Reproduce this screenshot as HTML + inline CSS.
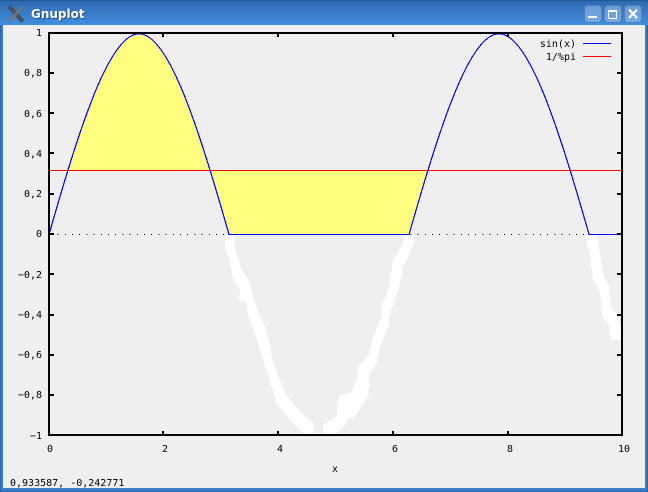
<!DOCTYPE html>
<html>
<head>
<meta charset="utf-8">
<title>Gnuplot</title>
<style>
html,body{margin:0;padding:0;width:648px;height:492px;overflow:hidden;background:#efefef}
svg{display:block}
text{font-family:"DejaVu Sans Mono","Liberation Mono",monospace;font-size:10px;fill:#000}
</style>
</head>
<body>
<svg width="648" height="492" viewBox="0 0 648 492" xmlns="http://www.w3.org/2000/svg">
<defs>
<linearGradient id="tb" x1="0" y1="0" x2="0" y2="1">
<stop offset="0" stop-color="#2c68ad"/>
<stop offset="0.5" stop-color="#3a7ac6"/>
<stop offset="1" stop-color="#3e8ee0"/>
</linearGradient>
<linearGradient id="btn" x1="0" y1="0" x2="0" y2="1">
<stop offset="0" stop-color="#6d9ad0"/>
<stop offset="1" stop-color="#76a8e4"/>
</linearGradient>
<clipPath id="above"><rect x="49" y="33" width="573" height="137"/></clipPath>
</defs>

<!-- window frame -->
<rect x="0" y="0" width="648" height="492" fill="#3a7cc8"/>
<rect x="0" y="0" width="648" height="25" fill="url(#tb)"/>
<rect x="0" y="0" width="648" height="1" fill="#1f5a9e"/>
<rect x="0" y="25" width="1" height="467" fill="#2a66ad"/>
<rect x="647" y="25" width="1" height="467" fill="#2a66ad"/>
<rect x="0" y="491" width="648" height="1" fill="#2a66ad"/>
<rect x="3" y="25" width="642" height="463" fill="#efefef"/>

<!-- X logo -->
<path d="M9 6.5 L23 21.5" stroke="#4a4f55" stroke-width="4" fill="none"/>
<path d="M23 6.5 L9 21.5" stroke="#70757b" stroke-width="3" fill="none"/>

<text x="31" y="18" style="font-family:'DejaVu Sans',sans-serif;font-weight:bold;font-size:12px;fill:#1d4d85" dx="1" dy="1">Gnuplot</text>
<text x="31" y="18" style="font-family:'DejaVu Sans',sans-serif;font-weight:bold;font-size:12px;fill:#fff">Gnuplot</text>

<!-- buttons -->
<rect x="584.5" y="5.5" width="17" height="17" rx="3" fill="url(#btn)" stroke="#4a80c0"/>
<rect x="604.5" y="5.5" width="17" height="17" rx="3" fill="url(#btn)" stroke="#4a80c0"/>
<rect x="624.5" y="5.5" width="17" height="17" rx="3" fill="url(#btn)" stroke="#4a80c0"/>
<rect x="588" y="16" width="9" height="2" fill="#fff"/>
<rect x="608.5" y="10.5" width="8" height="8" fill="none" stroke="#fff"/>
<rect x="608" y="10" width="9" height="2" fill="#fff"/>
<path d="M629 9.5 L637 18 M637 9.5 L629 18" stroke="#fff" stroke-width="2.2" fill="none"/>

<!-- white thick curve -->
<g fill="#fff" shape-rendering="crispEdges">
<path d="M225 235 L225 250 L230 260 L232.7 278.3 L240 290 L239 301.7 L246 301.7 L248.3 316.7 L255 333.3 L261.7 355 L271.7 386.7 L276.7 403.3 L290 420 L303.3 433.3 L313.3 433.3 L313.3 423.3 L305 416.7 L290 400 L285 393.3 L273.3 363.3 L270 346.7 L265 326.7 L255 303.3 L251.7 290 L248.3 280 L241.7 270 L235 250 L235 235 Z"/>
<path d="M323.3 433.3 L323.3 425 L336.7 416.7 L338.3 396.7 L351.7 391.7 L356.7 380 L358.3 366.7 L368.3 355 L373.3 336.7 L381.7 316.7 L381.7 305 L388.3 290 L393.3 260 L403.3 243.3 L403.3 235 L413.3 235 L413.3 245 L403.3 266.7 L398.3 290 L390 313.3 L388.3 326.7 L380 346.7 L376.7 363.3 L369.3 375 L368.3 396.7 L353.3 418.3 L346.7 419.3 L345 425 L336.7 433.3 Z"/>
<path d="M586 235 L586.7 243.3 L590 256.7 L593.3 280 L600 291.7 L602.7 316.7 L608.3 325 L611.7 340 L621 340 L621 330 L616.7 313.3 L611.7 310 L608.3 283.3 L603.3 275 L600.7 260 L596.7 235 Z"/>
</g>

<!-- zero axis dots -->
<path d="M50.4 234.5 H622" stroke="#000" stroke-width="1" stroke-dasharray="1 6.2" fill="none" shape-rendering="crispEdges"/>

<!-- yellow fill -->
<g transform="translate(49,234) scale(57.3,-200.75)">
<path d="M2.8177 0.3183 L2.9 0.2392 L3 0.1411 L3.1 0.0416 L3.1416 0 L6.2832 0 L6.4 0.1165 L6.5 0.2151 L6.6071 0.3183 Z" fill="#ffff80"/>
</g>
<g clip-path="url(#above)">
<g transform="translate(49,234) scale(57.3,-200.75)">
<path d="M0 0 C0.5236 0.5236 1.0472 1 1.5708 1 C2.0944 1 2.618 0.5236 3.1416 0 Z" fill="#ffff80"/>
</g>
</g>

<!-- red line -->
<rect x="49" y="170" width="573" height="1" fill="#ff0000"/>

<!-- blue curve -->
<g transform="translate(49,234.5) scale(57.3,-200.75)">
<path d="M0 0 C0.5236 0.5236 1.0472 1 1.5708 1 C2.0944 1 2.618 0.5236 3.1416 0 L6.2832 0 C6.8068 0.5236 7.3304 1 7.854 1 C8.3776 1 8.9012 0.5236 9.4248 0 L10 0" fill="none" stroke="#0000ff" stroke-width="1.2" vector-effect="non-scaling-stroke" shape-rendering="crispEdges"/>
</g>

<!-- box -->
<g fill="#000" shape-rendering="crispEdges">
<rect x="48" y="32" width="575" height="2"/>
<rect x="48" y="434" width="575" height="2"/>
<rect x="48" y="32" width="2" height="404"/>
<rect x="621" y="32" width="2" height="404"/>
<!-- y ticks -->
<rect x="50" y="72" width="4" height="2"/><rect x="617" y="72" width="4" height="2"/>
<rect x="50" y="112" width="4" height="2"/><rect x="617" y="112" width="4" height="2"/>
<rect x="50" y="152" width="4" height="2"/><rect x="617" y="152" width="4" height="2"/>
<rect x="50" y="193" width="4" height="2"/><rect x="617" y="193" width="4" height="2"/>
<rect x="50" y="233" width="4" height="2"/><rect x="617" y="233" width="4" height="2"/>
<rect x="50" y="273" width="4" height="2"/><rect x="617" y="273" width="4" height="2"/>
<rect x="50" y="314" width="4" height="2"/><rect x="617" y="314" width="4" height="2"/>
<rect x="50" y="354" width="4" height="2"/><rect x="617" y="354" width="4" height="2"/>
<rect x="50" y="394" width="4" height="2"/><rect x="617" y="394" width="4" height="2"/>
<!-- x ticks -->
<rect x="162" y="34" width="2" height="3"/><rect x="162" y="431" width="2" height="3"/>
<rect x="277" y="34" width="2" height="3"/><rect x="277" y="431" width="2" height="3"/>
<rect x="392" y="34" width="2" height="3"/><rect x="392" y="431" width="2" height="3"/>
<rect x="507" y="34" width="2" height="3"/><rect x="507" y="431" width="2" height="3"/>
</g>

<!-- y labels -->
<g text-anchor="end">
<text x="42" y="36">1</text>
<text x="42" y="76">0,8</text>
<text x="42" y="117">0,6</text>
<text x="42" y="157">0,4</text>
<text x="42" y="197">0,2</text>
<text x="42" y="237">0</text>
<text x="42" y="278">−0,2</text>
<text x="42" y="318">−0,4</text>
<text x="42" y="358">−0,6</text>
<text x="42" y="398">−0,8</text>
<text x="42" y="439">−1</text>
</g>
<!-- x labels -->
<g text-anchor="middle">
<text x="50" y="452">0</text>
<text x="165" y="452">2</text>
<text x="280" y="452">4</text>
<text x="395" y="452">6</text>
<text x="510" y="452">8</text>
<text x="624" y="452">10</text>
<text x="335" y="472">x</text>
</g>

<!-- legend -->
<text x="576" y="47" text-anchor="end">sin(x)</text>
<text x="576" y="60" text-anchor="end">1/%pi</text>
<rect x="583" y="43" width="28" height="1" fill="#0000ff"/>
<rect x="583" y="56" width="28" height="1" fill="#ff0000"/>

<!-- status -->
<text x="10" y="486">0,933587, -0,242771</text>
</svg>
</body>
</html>
